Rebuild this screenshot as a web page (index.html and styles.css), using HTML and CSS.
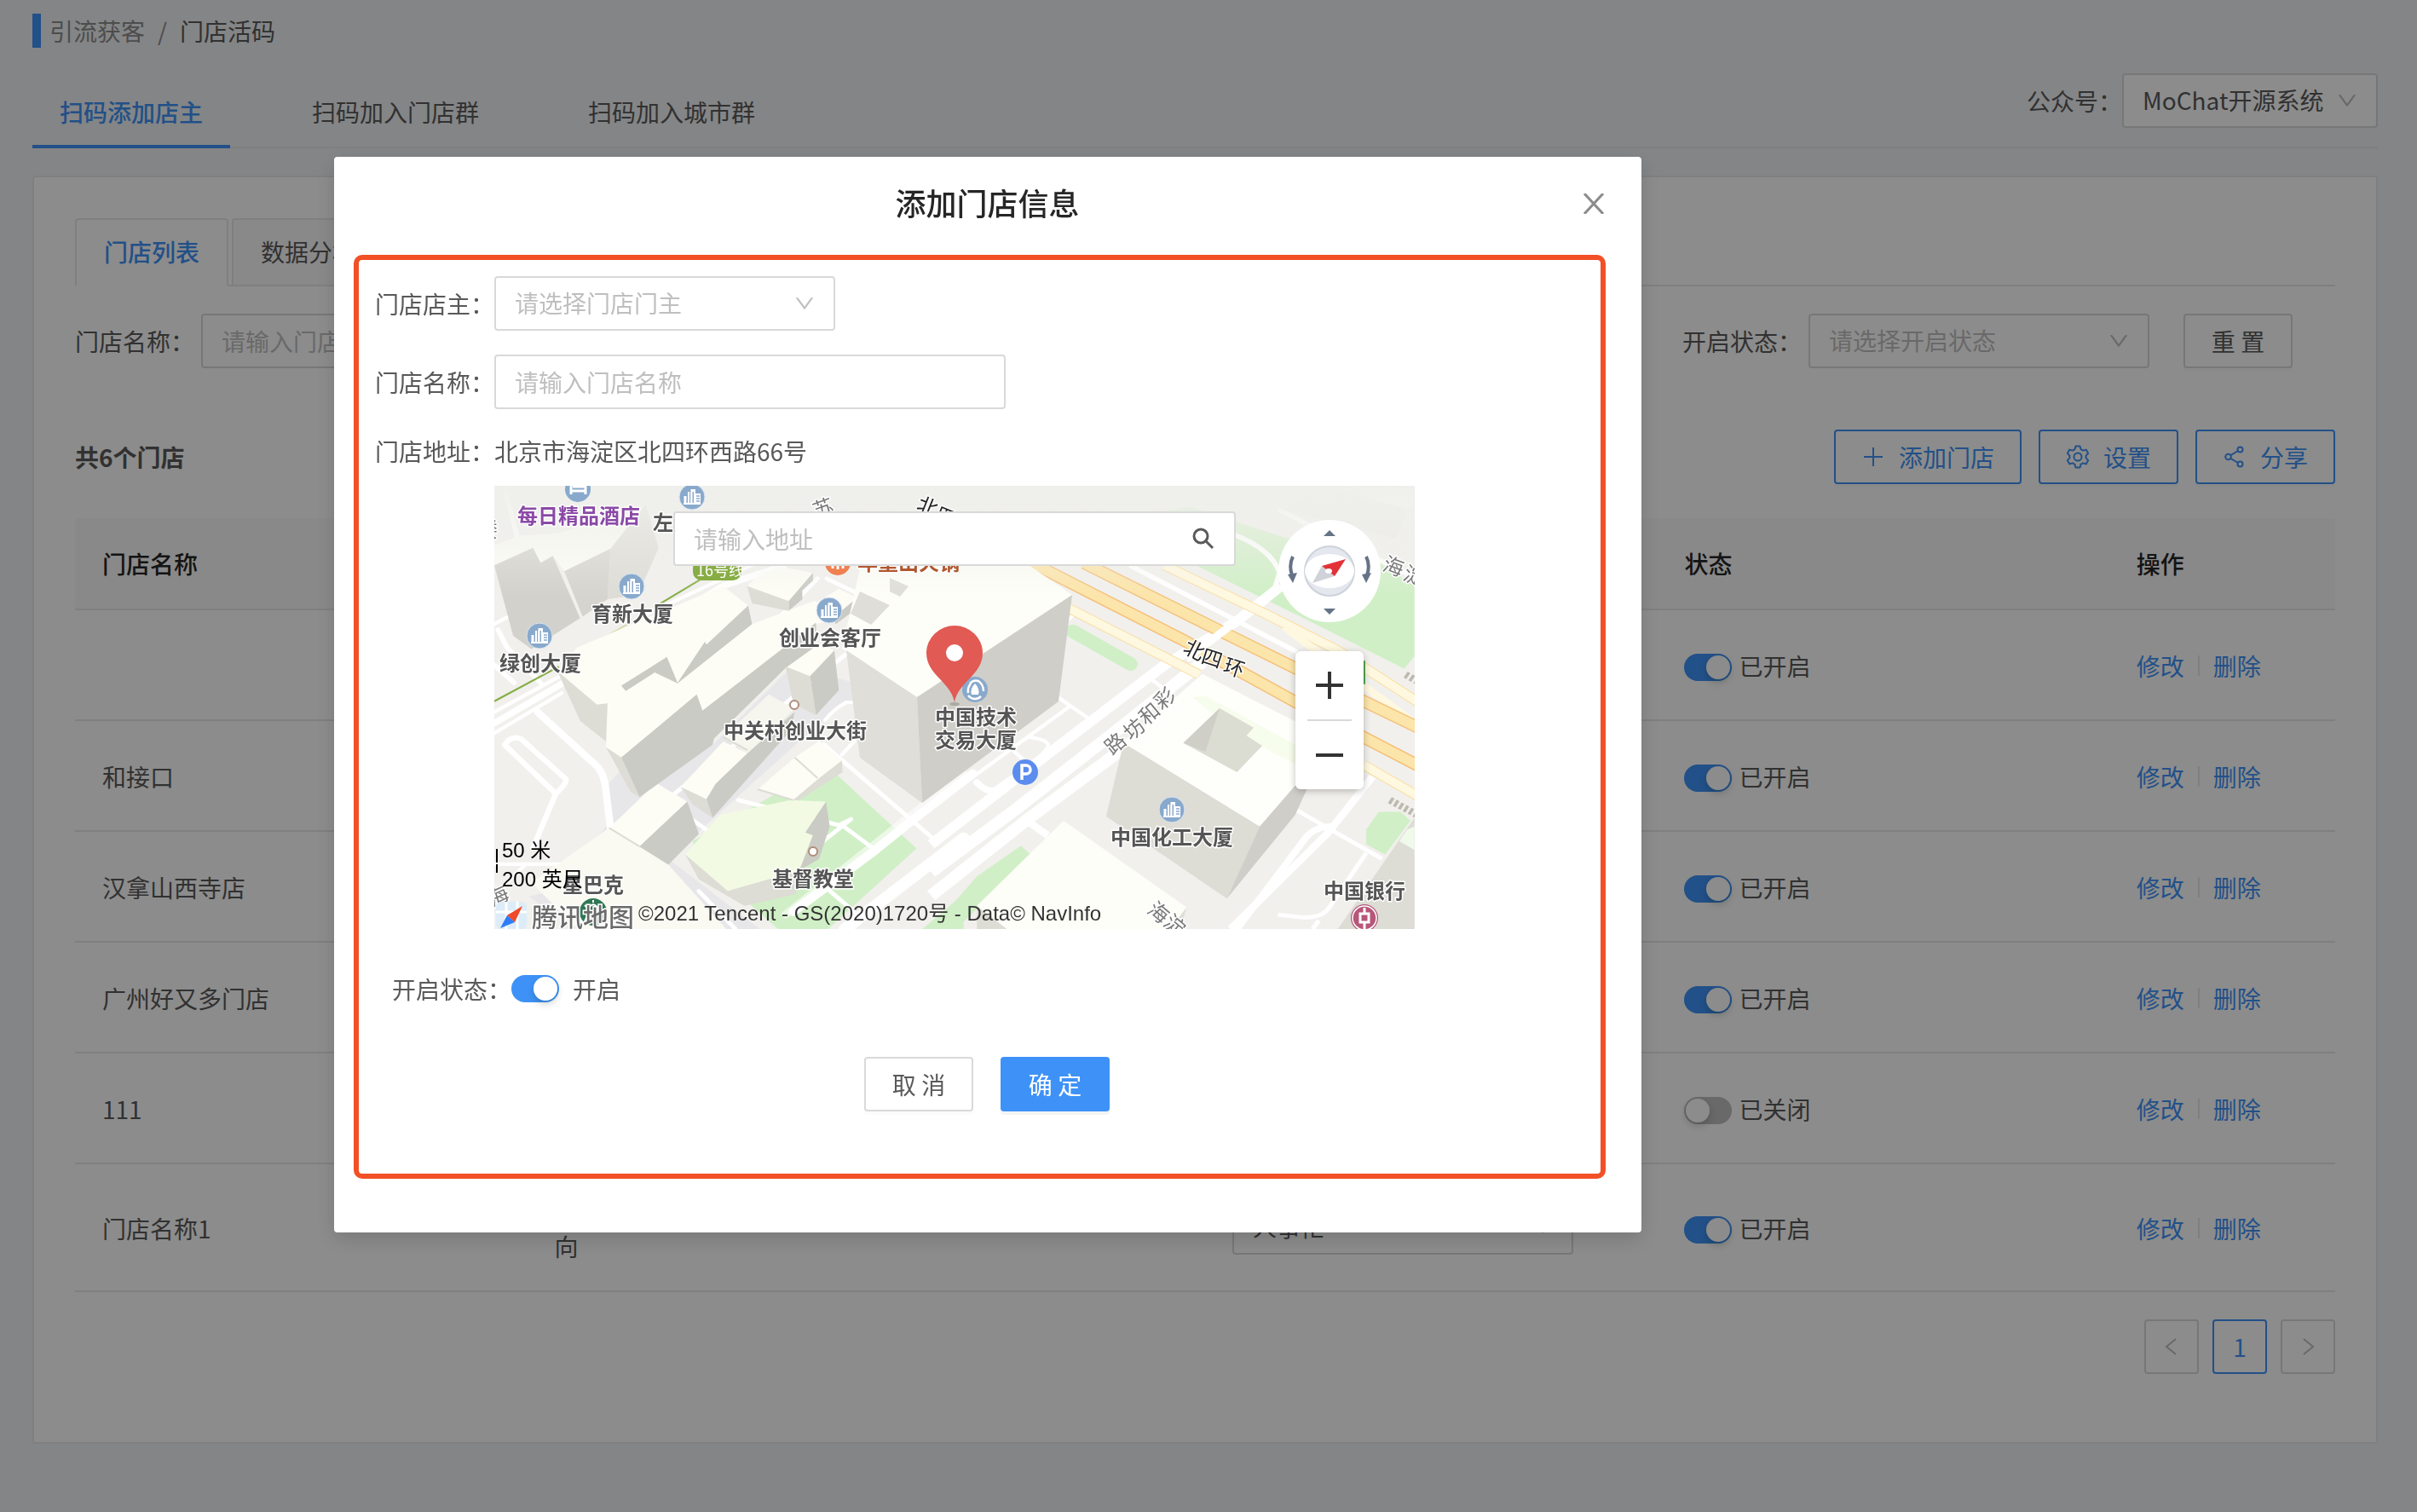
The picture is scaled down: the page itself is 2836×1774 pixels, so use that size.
FILE: index.html
```html
<!DOCTYPE html>
<html lang="zh-CN">
<head>
<meta charset="utf-8">
<title>门店活码</title>
<link rel="stylesheet" href="styles.css">
</head>
<body>
<svg class="defs" aria-hidden="true">
  <symbol id="chevron" viewBox="64 64 896 896"><path d="M884 256h-75c-5.1 0-9.900 2.500-12.900 6.600L512 654.200 227.900 262.600c-3-4.100-7.800-6.600-12.900-6.600h-75c-6.500 0-10.300 7.400-6.500 12.700l352.600 486.100c12.800 17.600 39 17.600 51.700 0l352.600-486.100c3.900-5.300.1-12.700-6.400-12.700z"/></symbol>
</svg>

<main class="page">
  <nav class="breadcrumb" aria-label="面包屑">
    <a href="#">引流获客</a><span class="slash">/</span><span class="current">门店活码</span>
  </nav>

  <div class="topbar">
    <div class="tabs">
      <a class="tab active" href="#">扫码添加店主</a>
      <a class="tab" href="#">扫码加入门店群</a>
      <a class="tab" href="#">扫码加入城市群</a>
    </div>
    <div class="account">
      <label for="account">公众号：</label>
      <div class="select account-select">
        <select id="account"><option>MoChat开源系统</option></select>
        <svg class="arrow"><use href="#chevron"/></svg>
      </div>
    </div>
  </div>

  <section class="card">
    <div class="card-tabs">
      <a class="card-tab active" href="#">门店列表</a>
      <a class="card-tab" href="#">数据分析</a>
    </div>

    <div class="filters">
      <div class="filter">
        <label for="f-name">门店名称：</label>
        <input class="input w400" id="f-name" type="text" placeholder="请输入门店名称">
      </div>
      <div class="filter">
        <label for="f-status">开启状态：</label>
        <div class="select w400 empty">
          <select id="f-status"><option>请选择开启状态</option></select>
          <svg class="arrow"><use href="#chevron"/></svg>
        </div>
        <button class="btn reset" type="button">重 置</button>
      </div>
    </div>

    <div class="toolbar">
      <strong>共6个门店</strong>
      <div class="actions">
        <button class="btn ghost" type="button">
          <svg class="icon" viewBox="0 0 28 28"><path d="M14 3v22M3 14h22" fill="none" stroke="currentColor" stroke-width="2"/></svg>添加门店</button>
        <button class="btn ghost" type="button">
          <svg class="icon" viewBox="0 0 28 28" fill="none" stroke="currentColor" stroke-width="2" stroke-linejoin="round"><path d="M11.500 1.500h5l1 3.600 2.600 1.500 3.600-1 2.500 4.300-2.600 2.700v2.800l2.600 2.700-2.500 4.300-3.600-1-2.600 1.500-1 3.600h-5l-1-3.600-2.600-1.500-3.600 1-2.500-4.300 2.600-2.700v-2.800L1.800 9.900l2.500-4.300 3.600 1 2.600-1.500z"/><circle cx="14" cy="14" r="4.500"/></svg>设置</button>
        <button class="btn ghost" type="button">
          <svg class="icon" viewBox="0 0 28 28" fill="none" stroke="currentColor" stroke-width="2"><circle cx="6.500" cy="14" r="3.300"/><circle cx="20.500" cy="5.500" r="3"/><circle cx="20.500" cy="22.500" r="3"/><path d="M9.300 12.200 18 7M9.300 15.800 18 21"/></svg>分享</button>
      </div>
    </div>

    <table class="table">
      <colgroup><col class="c20"><col class="c30"><col class="c20"><col class="c20"><col class="c10"></colgroup>
      <thead>
        <tr><th>门店名称</th><th></th><th></th><th>状态</th><th>操作</th></tr>
      </thead>
      <tbody>
        <tr><td></td><td></td><td></td>
          <td><label class="status"><input class="switch" type="checkbox" checked>已开启</label></td>
          <td><span class="ops"><a href="#">修改</a><a href="#">删除</a></span></td></tr>
        <tr><td>和接口</td><td></td><td></td>
          <td><label class="status"><input class="switch" type="checkbox" checked>已开启</label></td>
          <td><span class="ops"><a href="#">修改</a><a href="#">删除</a></span></td></tr>
        <tr><td>汉拿山西寺店</td><td></td><td></td>
          <td><label class="status"><input class="switch" type="checkbox" checked>已开启</label></td>
          <td><span class="ops"><a href="#">修改</a><a href="#">删除</a></span></td></tr>
        <tr><td>广州好又多门店</td><td></td><td></td>
          <td><label class="status"><input class="switch" type="checkbox" checked>已开启</label></td>
          <td><span class="ops"><a href="#">修改</a><a href="#">删除</a></span></td></tr>
        <tr><td>111</td><td></td><td></td>
          <td><label class="status"><input class="switch" type="checkbox">已关闭</label></td>
          <td><span class="ops"><a href="#">修改</a><a href="#">删除</a></span></td></tr>
        <tr><td>门店名称1</td><td>方<br>向</td>
          <td class="owner"><div class="select w400"><select aria-label="店主"><option>人事忙</option></select><svg class="arrow"><use href="#chevron"/></svg></div></td>
          <td><label class="status"><input class="switch" type="checkbox" checked>已开启</label></td>
          <td><span class="ops"><a href="#">修改</a><a href="#">删除</a></span></td></tr>
      </tbody>
    </table>

    <nav class="pagination" aria-label="分页">
      <button type="button" aria-label="上一页"><svg viewBox="0 0 24 24"><path d="M17 3 6 12l11 9"/></svg></button>
      <button type="button" class="active">1</button>
      <button type="button" aria-label="下一页"><svg viewBox="0 0 24 24"><path d="M7 3l11 9-11 9"/></svg></button>
    </nav>
  </section>
</main>

<div class="mask">
  <div class="modal" role="dialog" aria-labelledby="modal-title">
    <header class="modal-head">
      <h2 id="modal-title">添加门店信息</h2>
      <button class="close" type="button" aria-label="关闭"><svg viewBox="0 0 24 24"><path d="M1 0 23 24M23 0 1 24"/></svg></button>
    </header>

    <form class="form">
      <div class="field">
        <label for="owner">门店店主：</label>
        <div class="select w400 empty">
          <select id="owner"><option>请选择门店门主</option></select>
          <svg class="arrow"><use href="#chevron"/></svg>
        </div>
      </div>
      <div class="field">
        <label for="store">门店名称：</label>
        <input class="input w600" id="store" type="text" placeholder="请输入门店名称">
      </div>
      <div class="field">
        <span class="name">门店地址：</span>
        <span>北京市海淀区北四环西路66号</span>
      </div>

      <div class="map">
        <svg class="canvas" viewBox="0 0 1080 520">
          <defs>
            <linearGradient id="haze" x1="0" y1="0" x2="0" y2="1"><stop offset="0" stop-color="#efefeb" stop-opacity=".95"/><stop offset="1" stop-color="#efefeb" stop-opacity="0"/></linearGradient>
            <g id="poi"><circle r="15" fill="#88a9cc" stroke="#dbe6f0"/><path fill="#fff" d="M-9.500 9V-1h3V9zM-5 9V-6h3.500V-9H4V9H2V-6H.5V9h-2.300V-6h-1.200V9zM4-4h6V9H4zM-10 7h20v2h-20z"/><path stroke="#88a9cc" stroke-width="1.300" d="M5-1h4M5 2h4M5 5h4"/></g>
          </defs>
          <rect width="1080" height="520" fill="#f1f0ed"/>

          <!-- west half: streets, park, blocks -->
          <g transform="translate(-10 -10) scale(.35714 .34435)">
            <path fill="#e7e7e9" d="M450 990 100 1400 300 1539H900L600 1300 1180 760 1270 800 1210 700 1010 640 745 912 505 1090z"/>
            <path fill="#f1f0ed" d="M28 900 380 1000 415 1160 250 1400 28 1460z"/>
            <path fill="#d0efc6" d="M1100 990l50 20 265 255-290 274H960L700 1300l-20-60z"/>
            <path fill="#d0efc6" d="M1435 1539l135-120v120z"/>
            <g fill="none" stroke="#fff" stroke-linejoin="round" stroke-linecap="round">
              <path stroke-width="22" d="M28 838 330 655 780 370 980 300"/>
              <path stroke-width="12" d="M28 800 240 680M28 872 250 735M28 500l65-35M500 480l600-290"/>
              <path stroke-width="16" d="M40 520l30 60 110 120M28 640l65 60M60 30l50 200"/>
              <path stroke-width="24" d="M170 800 350 970q40 30 45 100l20 170"/>
              <path stroke-width="18" d="M230 1078 62 912q20-35 55-20l145 135q10 10-32 51l-75 185"/>
              <path stroke-width="12" d="M28 1318h390M410 1330v60M330 1280v40M130 1320l-60 60"/>
              <path stroke-width="14" d="M1090 345l-180 190M1120 345l120 60M1110 910l370 330M590 1100l160 120M600 1095l580-490"/>
              <path stroke-width="12" d="M1285 785q-30-20-100-18-40 20-70 60M1170 945l40-45 15-60"/>
              <path stroke-width="26" d="M985 1490 1570 1010" opacity=".55"/>
              <path stroke-width="30" d="M1010 1480 1280 1270 1400 1170 1600 1010"/>
              <path stroke-width="40" d="M1180 1539 1570 1230"/>
              <path stroke-width="14" d="M830 1100l330 85 40-20M1170 1185l110 85M1200 1165l-110 90M1120 1400l90 80M700 1410l120 129"/>
            </g>
            <g fill="none" stroke-width="6">
              <path stroke="#86ad45" d="M28 763 240 645M570 432 710 345"/>
              <path stroke="#d3e0ae" d="M295 602 475 495"/>
            </g>
            <g fill="#fdfdf6">
              <path d="M28 300 155 240 180 292 220 268 258 320 410 243 525 92 420 130 240 190 110 200 28 230z"/>
              <path d="M235 660 300 580 780 370 862 437 875 500 1080 420 1170 480 1085 500 712 795 693 740 445 955 395 920 400 770 365 775z"/>
              <path d="M858 370 900 330 970 305 1075 325 1035 380 995 422z"/>
              <path d="M1050 450 1160 380 1220 410 1140 480z"/>
              <path d="M985 645 1080 560 1145 590 1065 678z"/>
              <path d="M780 885 930 740 1015 790 860 940z" fill="#f6f6ee"/>
              <path d="M640 1055 780 900 860 940 755 1045 725 1097z"/>
              <path d="M893 1063 1015 955 1095 898 1170 965 1090 1030 1010 1100z"/>
              <path d="M150 1380 405 1195 600 1320 790 1539H300z" fill="#fafaf3"/>
              <path d="M405 1195 560 1042 662 1105 505 1258z"/>
            </g>
            <path fill="#f2fae3" d="M655 1285 770 1150 1000 1100 1118 1105 1050 1210 1075 1220 1030 1340 795 1410z"/>
            <g fill="#cbcbc5">
              <path fill="#d2d1cb" d="M28 300 155 240 180 292 220 268 310 480 150 585 90 540z"/>
              <path fill="#d5d4ce" d="M258 320 410 243 400 415 318 475z"/>
              <path fill="#dddcd6" d="M410 243 525 92 568 240 500 400 400 415z"/>
              <path d="M445 955 693 740 712 795 1085 495V575L985 650 750 890 745 912 505 1090z"/>
              <path d="M445 710 595 612 630 700 720 560 725 570 862 437 875 500 630 702 555 665 460 728z"/>
              <path d="M995 422 1075 325V352L1040 385V415L995 455z"/>
              <path d="M1140 480 1220 410 1215 450 1150 500z"/>
              <path d="M1065 678 1145 590 1160 725 1085 810z"/>
              <path d="M725 1097 755 1045 860 940 1015 800 1000 865 745 1160z"/>
              <path d="M505 1258 662 1105 700 1215 600 1320z"/>
              <path d="M1118 1105 1130 1190 1095 1300 1030 1340 1075 1220 1050 1210z"/>
            </g>
            <g fill="#dddcd5">
              <path d="M395 920 445 955 505 1090 475 1070z"/>
              <path d="M235 660 365 775 400 770 395 900 310 830z"/>
              <path d="M858 370 995 422V455L875 430z"/>
              <path d="M985 645 1065 678 1085 810 1010 770z"/>
              <path d="M640 1055 725 1097 745 1160 680 1115z"/>
              <path d="M1090 1030 1170 965 1172 1005 1030 1100 1010 1100z"/>
              <path d="M655 1285 795 1410 1030 1340 1020 1420 850 1460 700 1370z"/>
            </g>
            <path fill="none" stroke="#dddcd5" stroke-width="6" d="M405 1195 505 1258M893 1063 1010 1100M1015 955l75 70M780 885l80 45"/>
          </g>

          <!-- east half: ring road, park, towers -->
          <g transform="translate(520 -10) scale(.3699 .34435)">
            <path fill="#d0efc6" d="M560 150 800 100 1085 200 1400 290 1513 370V610L1480 652 1180 490 990 390 820 300z"/>
            <path fill="#f7f7f3" d="M1260 29H1513V90L1490 110z"/>
            <path fill="#ecebe8" d="M1200 29 1490 108 1455 210 1100 110z"/>
            <g fill="none" stroke="#fff" stroke-linejoin="round">
              <path stroke-width="16" d="M940 195q120 50 145 130l-20 70M610 300 1140 595M1080 110l433 230"/>
              <path stroke-width="34" d="M-20 1250 330 960 720 640 950 490 1090 370"/>
              <path stroke-width="40" d="M-20 1345 250 1130 560 870 840 630"/>
              <path stroke-width="40" d="M-20 1425 280 1170 620 900"/>
              <path stroke-width="12" d="M-20 1125 420 780M170 590 490 830M260 640 440 460M680 690l50 40M290 885q70 10 60 35-30 50-70 60M240 930l60 60"/>
              <path stroke-width="22" stroke-linecap="round" d="M125 1040q30 35 60 25l80-60"/>
              <path stroke-width="24" d="M1380 1020 1240 1210 930 1539M270 1160l80 60"/>
              <path stroke-width="22" d="M1250 1190q-60 0-90 50L950 1539"/>
              <path stroke-width="14" d="M1100 1110 1410 1300M1360 1280 1240 1470q-20 30-80 30l-80-10M1210 1510l-20 29"/>
            </g>
            <g fill="none">
              <path stroke="#f8dfa4" stroke-width="34" d="M390 432 830 672M720 300 1040 465 1270 590 1530 770M1352 980 1530 1090"/>
              <path stroke="#fff8e0" stroke-width="28" d="M390 432 830 672M720 300 1040 465 1270 590 1530 770M1352 980 1530 1090"/>
              <path stroke="#fff8e0" stroke-width="24" d="M1100 510 1300 670 1500 825"/>
              <path stroke="#f5bf78" stroke-width="42" d="M300 292 780 555 1135 765 1530 985M465 292 900 525 1135 650 1530 855"/>
              <path stroke="#fce5aa" stroke-width="34" d="M300 292 780 555 1135 765 1530 985M465 292 900 525 1135 650 1530 855"/>
              <path stroke="#fff" stroke-width="26" d="M790 620 960 480"/>
              <path stroke="#d0efc6" stroke-width="46" stroke-linecap="round" d="M430 525 612 636"/>
            </g>
            <path fill="#fefefb" d="M590 905 840 670 1150 840V1045L1022 1190z"/>
            <path fill="#f7fdec" d="M810 750 850 745 1150 920V985L960 880z"/>
            <path fill="#dcddd2" d="M895 787 1003 853 980 880 1030 915 950 1005 780 905z"/>
            <path fill="#cfcfc8" d="M895 787 850 935 780 905z"/>
            <path fill="#dddcd5" d="M590 905 1022 1190 918 1435 535 1155z"/>
            <path fill="#cfcec9" d="M1022 1190 1135 1050 1172 1062 1135 1150 918 1435z"/>
            <path fill="#d0efc6" d="M-20 1539 125 1360 265 1255 300 1290 60 1539zM1400 1140h70l30 30-80 115-60-35v-50z"/>
            <path fill="#fefef8" d="M125 1460 400 1170 790 1465 760 1539H125z"/>
            <path fill="#dddcd5" d="M125 1460 220 1539H125zM1513 1160 1270 1539H1513zM790 1465 770 1539H740z"/>
            <path fill="#f0faea" d="M1490 1200 1513 1190V1270L1465 1240z"/>
            <path fill="none" stroke="#bcbaae" stroke-width="24" stroke-dasharray="10 8" d="M1435 1100 1530 1155M1485 672l40 25"/>
            <path stroke="#3f9c3c" stroke-width="5" d="M1354 625v80"/>
          </g>

          <!-- tower under the pin -->
          <path fill="#fefef8" d="M408 191 496 248 678 128 627 93H430z"/>
          <path fill="#dfded8" d="M413 193 496 248 502 372 429 319zM429 124 464 140 442 163 418 150zM464 108l22 10-10 12-12-6z"/>
          <path fill="#cfcec9" d="M496 248 678 128 662 253 502 372z"/>
          <rect width="1080" height="130" fill="url(#haze)"/>

          <!-- points of interest -->
          <use href="#poi" x="232" y="13"/><use href="#poi" x="161" y="118"/><use href="#poi" x="53" y="176"/><use href="#poi" x="393" y="146"/><use href="#poi" x="795" y="380"/>
          <circle cx="98" cy="4" r="15" fill="#88a9cc"/><path d="M90-4v14M90 6h17M107 10V1H92" fill="none" stroke="#fff" stroke-width="3"/>
          <circle cx="564" cy="239" r="15" fill="#88a9cc"/><path d="M558 232a10 10 0 0 1 10-3q6 4 6 12M571 247a10 10 0 0 1-15-1M556 243q-1-6 3-11" fill="none" stroke="#fff" stroke-width="2.500"/><path d="M564 232q6 6 4 13h-8q-2-7 4-13z" fill="#fff"/>
          <circle cx="623" cy="336" r="15" fill="#5b8cee"/><path d="M619 345v-17h5a5 5 0 0 1 0 10h-5" fill="none" stroke="#fff" stroke-width="3.500"/>
          <circle cx="403" cy="90" r="15" fill="#ef8050"/><path d="M397 88v9M403 86v12M409 88v9" stroke="#fff" stroke-width="3"/>
          <circle cx="352" cy="257" r="5" fill="#fff" stroke="#b08c78" stroke-width="2"/><circle cx="374" cy="429" r="5" fill="#fff" stroke="#b08c78" stroke-width="2"/>
          <circle cx="1021" cy="507" r="16" fill="#b65678"/><circle cx="1021" cy="507" r="14" fill="none" stroke="#fff" stroke-width="1.500"/><path d="M1016 502h10v10h-10zM1021 495v7M1021 512v8" fill="none" stroke="#fff" stroke-width="3"/>
          <circle cx="116" cy="500" r="16" fill="#2f7755"/><path d="M116 491q-8 3-6 12l-4 8M116 491q8 3 6 12l4 8M116 486v3M106 492l3 3M126 492l-3 3" fill="none" stroke="#fff" stroke-width="2"/>
          <rect x="233" y="86" width="57" height="25" rx="10" fill="#88ad45"/>

          <g class="lbl">
            <text class="line-no" x="237" y="106">16号线</text>
            <text class="food" x="426" y="99">年重山火锅</text>
            <text class="hotel" x="27" y="44">每日精品酒店</text>
            <text x="186" y="52">左</text>
            <text x="114" y="159">育新大厦</text>
            <text x="6" y="217">绿创大厦</text>
            <text x="334" y="187">创业会客厅</text>
            <text x="269" y="296">中关村创业大街</text>
            <text x="517" y="280">中国技术</text>
            <text x="517" y="307">交易大厦</text>
            <text x="326" y="470">基督教堂</text>
            <text x="80" y="477">星巴克</text>
            <text x="723" y="421">中国化工大厦</text>
            <text x="973" y="484">中国银行</text>
          </g>
          <g class="lbl street">
            <text class="ring" transform="translate(821 193) rotate(27)" y="8">北</text>
            <text class="ring" transform="translate(842 203) rotate(18)" y="8">四</text>
            <text class="ring" transform="translate(868 214) rotate(18)" y="8">环</text>
            <text class="ring" transform="translate(508 25) rotate(22)" y="8">北</text>
            <text class="ring" transform="translate(530 37) rotate(22)" y="8">四</text>
            <text transform="translate(729 303) rotate(-40)" y="8">路</text>
            <text transform="translate(751 286) rotate(-40)" y="8">坊</text>
            <text transform="translate(769 268) rotate(-40)" y="8">和</text>
            <text transform="translate(787 250) rotate(-40)" y="8">彩</text>
            <text transform="translate(1055 95) rotate(20)" y="8">海</text>
            <text transform="translate(1079 106) rotate(20)" y="8">淀</text>
            <text transform="translate(779 501) rotate(40)" y="8">海</text>
            <text transform="translate(798 516) rotate(40)" y="8">淀</text>
            <text transform="translate(386 27) rotate(-20)" y="8">苏</text>
            <text transform="translate(5 482) rotate(-25)" y="8">海</text>
            <text transform="translate(-8 52)" y="8">楼</text>
          </g>

          <!-- pin -->
          <ellipse cx="540" cy="256" rx="6" ry="2" fill="#a9a9a2"/>
          <path fill="#e15a54" d="M540 254C536 230 507 222 507 196a33 32 0 0 1 66 0C573 222 544 230 540 254z"/>
          <circle cx="540" cy="196" r="10" fill="#fff"/>

          <!-- scale and credits -->
          <path stroke="#000" stroke-width="2" d="M3 426v16M3 444v10"/>
          <g class="scale"><text x="9" y="436">50 米</text><text x="9" y="470">200 英尺</text></g>
          <rect x="2" y="488" width="36" height="32" rx="6" fill="#dcecf8"/><path d="M14 488v32M27 488v32M2 500h36" stroke="#fff" stroke-width="3"/>
          <path fill="#ef4a2a" d="M33 493 15 504 24 512z"/><path fill="#2f7df6" d="M7 519 15 504 24 512z"/>
          <text class="brand" x="44" y="517">腾讯地图</text>
          <text class="credit" x="169" y="510">©2021 Tencent - GS(2020)1720号 - Data© NavInfo</text>

          <!-- compass -->
          <circle cx="980" cy="100" r="60" fill="#fff"/>
          <circle cx="980" cy="100" r="29" fill="#e4e8ee" stroke="#cdd2da" stroke-width="2"/>
          <ellipse cx="980" cy="100" rx="29" ry="20" fill="#fff"/>
          <path fill="#cfd2d8" d="M960 114 971 94 986 106z"/><path fill="#e23238" d="M999 86 971 94 986 106z"/><ellipse cx="979" cy="100" rx="4" ry="3" fill="#fff"/>
          <g fill="#667387"><path d="M973 59h14l-7-7zM973 144h14l-7 7zM931 104l11-2-5 12zM1029 102l-11 2 5 10z"/></g>
          <path d="M937 83q-5 10-1 22M1023 83q5 10 1 22" fill="none" stroke="#667387" stroke-width="4"/>
        </svg>

        <div class="map-search">
          <input class="input" type="text" aria-label="地址" placeholder="请输入地址">
          <button type="button" aria-label="搜索"><svg viewBox="0 0 24 24"><circle cx="9" cy="9" r="8"/><path d="m15 15 8 8"/></svg></button>
        </div>
        <div class="zoom">
          <button type="button" aria-label="放大"><svg viewBox="0 0 32 32"><path d="M16 0v32M0 16h32"/></svg></button>
          <button type="button" aria-label="缩小"><svg viewBox="0 0 32 32"><path d="M0 16h32"/></svg></button>
        </div>
      </div>

      <div class="enable">
        <label for="enable">开启状态：</label>
        <input class="switch" id="enable" type="checkbox" checked>
        <span>开启</span>
      </div>

      <div class="foot">
        <button class="btn" type="button">取 消</button>
        <button class="btn primary" type="button">确 定</button>
      </div>
    </form>
  </div>
</div>
</body>
</html>
```
FILE: styles.css
```css
* { box-sizing: border-box; }

:root {
  --blue: #3e92f7;
  --text: #595959;
  --line: #e8e8e8;
  --border: #d9d9d9;
  --hint: #bfbfbf;
}

body {
  margin: 0;
  min-height: 100vh;
  background: #f0f2f5;
  color: var(--text);
  font: 28px/42px "Noto Sans CJK SC", sans-serif;
}

a { color: var(--blue); text-decoration: none; }
button, input, select { font: inherit; color: inherit; margin: 0; }
button { cursor: pointer; }
.defs { display: none; }

.page { padding: 16px 46px 80px 38px; }

.breadcrumb {
  display: flex;
  align-items: center;
  height: 40px;
  padding-left: 10px;
  border-left: 10px solid var(--blue);
}
.breadcrumb a, .slash { color: #8c8c8c; }
.slash { padding: 0 15px; }
.current { color: var(--text); }

.topbar {
  display: flex;
  justify-content: space-between;
  align-items: flex-start;
  height: 88px;
  margin-top: 30px;
  border-bottom: 2px solid var(--line);
}
.tabs { display: flex; gap: 64px; margin-top: 8px; }
.tab {
  padding: 0 32px 2px;
  line-height: 74px;
  border-bottom: 4px solid transparent;
  color: var(--text);
}
.tab.active { color: var(--blue); border-color: var(--blue); font-weight: 500; }
.account { display: flex; align-items: center; }
.account-select { width: 300px; }

.input, .select select {
  display: block;
  width: 100%;
  height: 64px;
  padding: 0 22px;
  border: 2px solid var(--border);
  border-radius: 4px;
  background: #fff;
  outline: none;
}
.input::placeholder { color: var(--hint); opacity: 1; }
.select { position: relative; }
.select select { appearance: none; padding-bottom: 2px; }
.select.empty select { color: var(--hint); }
.arrow {
  position: absolute;
  right: 24px;
  top: 20px;
  width: 24px;
  height: 24px;
  fill: var(--hint);
  pointer-events: none;
}
.w400, .input.w400 { width: 400px; }
.input.w600 { width: 600px; }

.btn {
  height: 64px;
  padding: 0 30px;
  border: 2px solid var(--border);
  border-radius: 4px;
  background: #fff;
  box-shadow: 0 4px 0 rgba(0, 0, 0, .016);
  white-space: nowrap;
}
.btn.ghost { display: flex; align-items: center; gap: 16px; color: var(--blue); border-color: var(--blue); }
.btn.primary { color: #fff; background: var(--blue); border-color: var(--blue); box-shadow: 0 4px 0 rgba(0, 0, 0, .045); }
.icon { width: 28px; height: 28px; }
.reset, .foot .btn { width: 128px; }

.card {
  margin-top: 32px;
  padding: 48px 48px 80px;
  background: #fff;
  border: 2px solid var(--line);
  border-radius: 4px;
}
.card-tabs { display: flex; gap: 4px; height: 80px; border-bottom: 2px solid var(--line); }
.card-tab {
  height: 80px;
  padding: 0 32px;
  line-height: 74px;
  border: 2px solid var(--line);
  border-radius: 4px 4px 0 0;
  background: #fafafa;
  color: var(--text);
}
.card-tab.active { color: var(--blue); background: #fff; border-bottom-color: #fff; font-weight: 500; }

.filters { display: flex; justify-content: space-between; margin-top: 32px; padding-right: 50px; }
.filter { display: flex; align-items: center; gap: 8px; }
.reset { margin-left: 32px; }

.toolbar { display: flex; justify-content: space-between; align-items: center; margin-top: 72px; }
.actions { display: flex; gap: 20px; }

.table { width: 100%; margin-top: 40px; border-collapse: separate; border-spacing: 0; table-layout: fixed; }
.c20 { width: 20%; }
.c30 { width: 30%; }
.c10 { width: 10%; }
.table th, .table td { height: 130px; padding: 33px 32px 31px; text-align: left; border-bottom: 2px solid var(--line); white-space: nowrap; }
.table th { height: 108px; padding: 32px; background: #fafafa; color: #262626; font-weight: 500; }
.table td.owner { padding: 0 32px; }
.status { display: flex; align-items: center; gap: 8px; }
.status .switch { margin-top: 4px; }
.ops { display: flex; align-items: center; }
.ops a + a { margin-left: 16px; padding-left: 18px; background: linear-gradient(var(--line), var(--line)) 0 50% / 2px 24px no-repeat; }

.switch {
  appearance: none;
  flex: none;
  width: 56px;
  height: 32px;
  padding: 2px;
  border-radius: 16px;
  background: var(--hint);
}
.switch::before {
  content: "";
  display: block;
  width: 28px;
  height: 28px;
  border-radius: 50%;
  background: #fff;
  box-shadow: 0 4px 8px rgba(0, 35, 11, .2);
}
.switch:checked { background: var(--blue); }
.switch:checked::before { margin-left: auto; }

.pagination { display: flex; justify-content: flex-end; gap: 16px; margin-top: 32px; }
.pagination button {
  display: grid;
  place-items: center;
  width: 64px;
  height: 64px;
  padding: 0;
  border: 2px solid var(--border);
  border-radius: 4px;
  background: #fff;
}
.pagination svg { width: 24px; height: 24px; fill: none; stroke: var(--hint); stroke-width: 2; }
.pagination .active { color: var(--blue); border-color: var(--blue); }

/* dialog */
.mask { position: fixed; inset: 0; overflow: auto; background: rgba(0, 0, 0, .45); }
.modal {
  width: 1534px;
  margin: 184px 0 48px 392px;
  padding: 0 42px 63px 23px;
  background: #fff;
  border-radius: 4px;
  box-shadow: 0 8px 24px rgba(0, 0, 0, .15);
}
.modal-head { display: flex; align-items: center; height: 115px; padding: 0 0 5px 44px; }
.modal-head h2 { flex: 1; margin: 0; padding-bottom: 5px; color: #262626; font-size: 36px; font-weight: 500; text-align: center; }
.close { width: 26px; height: 24px; padding: 0; border: 0; background: none; }
.close svg { display: block; width: 24px; height: 24px; fill: none; stroke: #8c8c8c; stroke-width: 3; }

.form {
  padding: 19px 0 73px 19px;
  border: 6px solid #f25026;
  border-radius: 10px;
}
.field { display: flex; align-items: center; margin-bottom: 28px; }
.field > label, .field > .name { width: 140px; }

.map { position: relative; width: 1080px; height: 520px; margin: -8px 0 0 140px; overflow: hidden; }
.canvas { display: block; width: 100%; height: 100%; }
.lbl { font-size: 24px; font-weight: 700; fill: #555; stroke: #fff; stroke-width: 3px; stroke-linejoin: round; paint-order: stroke; }
.lbl .hotel { fill: #8a4aa6; }
.lbl .food { fill: #b0572f; }
.lbl .line-no { font-size: 18px; fill: #fff; stroke: none; font-weight: 400; }
.street { font-weight: 400; fill: #7a7a7a; text-anchor: middle; }
.street .ring { fill: #262626; }
.scale, .credit { font-family: "Liberation Sans", "Noto Sans CJK SC", sans-serif; font-size: 24px; fill: #000; }
.credit { fill: #333; }
.brand { font-size: 30px; font-weight: 500; fill: #6b6b6b; stroke: #fff; stroke-width: 3px; paint-order: stroke; }

.map-search { position: absolute; left: 210px; top: 30px; width: 660px; }
.map-search button { position: absolute; right: 26px; top: 20px; width: 24px; height: 24px; padding: 0; border: 0; background: none; }
.map-search svg { display: block; fill: none; stroke: var(--text); stroke-width: 3; overflow: visible; }

.zoom {
  position: absolute;
  right: 60px;
  top: 194px;
  width: 80px;
  padding: 0 14px;
  border-radius: 6px;
  background: #fff;
  box-shadow: 0 2px 8px rgba(0, 0, 0, .25);
}
.zoom button { display: grid; place-items: center; width: 52px; height: 80px; padding: 0; border: 0; background: none; }
.zoom button + button { height: 82px; border-top: 2px solid var(--border); }
.zoom svg { width: 32px; height: 32px; fill: none; stroke: #333; stroke-width: 4; }

.enable { display: flex; align-items: center; margin-top: 49px; padding-left: 20px; }
.enable label { width: 140px; }
.enable span { margin-left: 16px; }
.foot { display: flex; justify-content: center; gap: 32px; margin-top: 59px; padding-right: 2px; }
```
